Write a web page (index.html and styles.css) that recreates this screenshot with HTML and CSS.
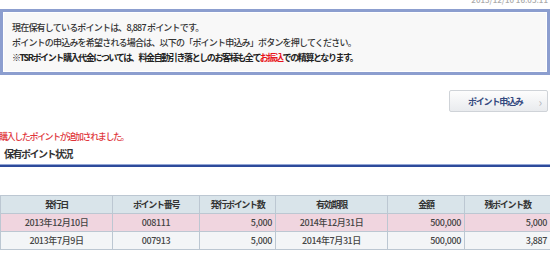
FILE: index.html
```html
<!DOCTYPE html>
<html>

	<head>
		<meta charset="UTF-8">
		<title>保有ポイント状況</title>
		<link rel="stylesheet" href="styles.css">
	</head>

	<body>
		<div class="stamp">2013/12/10 16:05:11</div>
		<div class="notice">
			<p>現在保有しているポイントは、8,887 ポイントです。</p>
			<p>ポイントの申込みを希望される場合は、以下の「ポイント申込み」ボタンを押してください。</p>
			<p class="strong">※TSRポイント購入代金については、料金自動引き落としのお客様も全て<span class="red">お振込</span>での精算となります。</p>
		</div>
		<div class="actions">
			<a href="#" class="btn">ポイント申込み<span class="arrow">›</span></a>
		</div>
		<p class="msg">購入したポイントが追加されました。</p>
		<h2 class="title">保有ポイント状況</h2>
		<div class="rule"></div>
		<table class="list">
			<colgroup>
				<col class="c1">
				<col class="c2">
				<col class="c3">
				<col class="c4">
				<col class="c5">
				<col class="c6">
			</colgroup>
			<thead>
				<tr>
					<th>発行日</th>
					<th>ポイント番号</th>
					<th>発行ポイント数</th>
					<th>有効期限</th>
					<th>金額</th>
					<th>残ポイント数</th>
				</tr>
			</thead>
			<tbody>
				<tr class="new">
					<td class="center">2013年12月10日</td>
					<td class="center">008111</td>
					<td class="num">5,000</td>
					<td class="center">2014年12月31日</td>
					<td class="num">500,000</td>
					<td class="num">5,000</td>
				</tr>
				<tr>
					<td class="center">2013年7月9日</td>
					<td class="center">007913</td>
					<td class="num">5,000</td>
					<td class="center">2014年7月31日</td>
					<td class="num">500,000</td>
					<td class="num">3,887</td>
				</tr>
			</tbody>
		</table>
	</body>

</html>
```

FILE: styles.css
```css
* {
	margin: 0;
	padding: 0
}

body {
	width: 550px;
	font-family: "Noto Sans CJK JP", "Noto Sans", sans-serif;
	font-size: 9px;
	font-weight: 500;
	letter-spacing: -0.8px;
	color: #333;
	background: #fff;
	overflow: hidden;
}

.stamp {
	height: 9px;
	line-height: 0;
	padding-right: 2px;
	text-align: right;
	font-size: 8px;
	letter-spacing: 0;
	color: #aaa;
	overflow: hidden;
}

.notice {
	border: 3px solid #8c9ecf;
	box-shadow: inset 0 0 0 1px #fff;
	background: #f8f8f8;
	padding: 8px 9px 7px;
	line-height: 15px;
}

.notice p {
	white-space: nowrap;
}

.notice .strong {
	font-weight: bold;
	letter-spacing: -1.4px;
	color: #222;
}

.red {
	color: #e8141b;
}

.actions {
	display: flex;
	justify-content: flex-end;
	padding: 15px 2px 0 0;
}

.btn {
	display: flex;
	align-items: center;
	justify-content: space-between;
	width: 99px;
	height: 22px;
	box-sizing: border-box;
	padding: 0 6px 0 18px;
	border: 1px solid #cfd3d8;
	border-radius: 2px;
	background: linear-gradient(#fdfdfd, #e9ebee);
	color: #34497f;
	font-weight: bold;
	letter-spacing: -1.2px;
	white-space: nowrap;
	text-decoration: none;
}

.arrow {
	color: #b5b9c0;
	font-size: 12px;
	font-weight: normal;
}

.msg {
	margin: 18px 0 0 -1px;
	line-height: 14px;
	letter-spacing: -1.4px;
	color: #e0343a;
	white-space: nowrap;
}

.title {
	margin-top: 1px;
	padding-left: 4px;
	font-size: 10px;
	letter-spacing: -1.5px;
	line-height: 17px;
	color: #333;
}

.rule {
	margin-top: 2px;
	height: 2px;
	border-top: 1px solid #93a6d6;
	background: #2d4b9b;
}

.list {
	margin-top: 28px;
	width: 550px;
	border-collapse: collapse;
	table-layout: fixed;
}

.list th,
.list td {
	height: 17px;
	border: 1px solid #bcc7d2;
	padding: 0 3px;
	line-height: 17px;
	letter-spacing: -0.4px;
	white-space: nowrap;
}

.list th {
	background: #d9e4ea;
	font-weight: bold;
	letter-spacing: -1.3px;
	color: #333;
}

.list td {
	background: #f3f5f7;
	color: #444;
}

.list tr.new td {
	background: #f0d5df;
}

.center {
	text-align: center;
}

.num {
	text-align: right;
}

.c1 { width: 112px; }
.c2 { width: 87px; }
.c3 { width: 76px; }
.c4 { width: 112px; }
.c5 { width: 77px; }
.c6 { width: 86px; }
```
